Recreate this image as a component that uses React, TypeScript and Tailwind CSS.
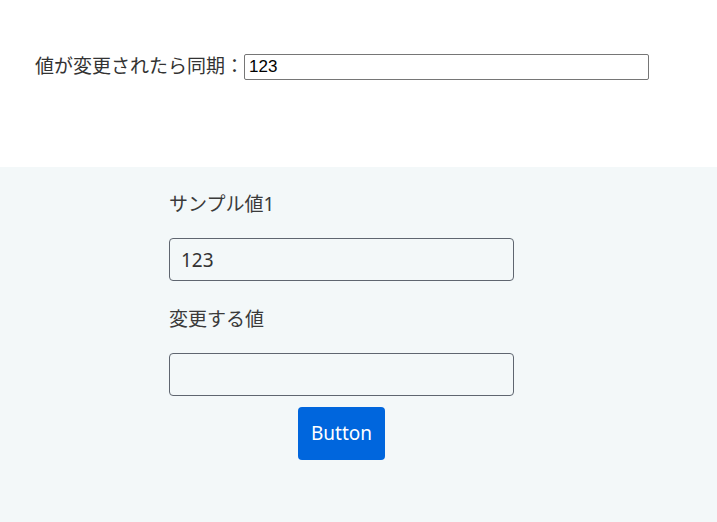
export default function App() {
  return (
    <div className="w-[717px] h-[522px] bg-white text-[#333] font-['Noto_Sans','Noto_Sans_CJK_JP',sans-serif]">
      {/* sync row */}
      <div className="h-[167px] pt-[53px] pl-[35px]">
        <div className="flex items-center">
          <span className="text-[19px] leading-[27px] text-[#333]">値が変更されたら同期：</span>
          <input
            defaultValue="123"
            className="w-[405px] h-[26px] border border-[#767676] rounded-[2px] px-[4px] text-[17px] text-black bg-white font-['Liberation_Sans',Arial,sans-serif] outline-none"
          />
        </div>
      </div>

      {/* form */}
      <div className="h-[355px] bg-[#f3f8f9] pt-[24px] pl-[169px]">
        <div className="w-[345px] flex flex-col">
          <label className="text-[19px] leading-[27px] text-[#3a3a3a]">サンプル値1</label>
          <input
            defaultValue="123"
            className="mt-[20px] h-[43px] border border-[#5f6670] rounded-[4px] px-[11px] text-[19px] text-[#333] bg-transparent outline-none"
          />
          <label className="mt-[25px] text-[19px] leading-[27px] text-[#3a3a3a]">変更する値</label>
          <input className="mt-[20px] h-[43px] border border-[#5f6670] rounded-[4px] px-[11px] text-[19px] text-[#333] bg-transparent outline-none" />
          <div className="mt-[11px] flex justify-center">
            <button className="w-[87px] h-[53px] rounded-[4px] bg-[#0066dd] text-white text-[19px]">
              Button
            </button>
          </div>
        </div>
      </div>
    </div>
  );
}
